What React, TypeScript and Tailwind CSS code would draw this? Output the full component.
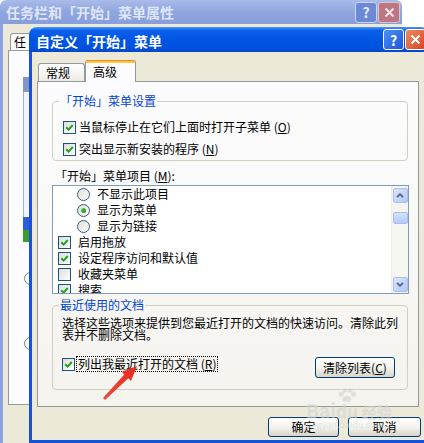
import React from 'react';

function CheckBox({ checked }: { checked: boolean }) {
  return (
    <span className="flex h-[13px] w-[13px] shrink-0 items-center justify-center border border-[#1c5180] bg-gradient-to-br from-[#dcdcd7] to-white">
      {checked && (
        <svg width="9" height="9" viewBox="0 0 9 9">
          <path d="M1.2 4.2 L3.6 6.6 L7.8 2" stroke="#21a121" strokeWidth="2" fill="none" />
        </svg>
      )}
    </span>
  );
}

function Radio({ checked }: { checked: boolean }) {
  return (
    <span className="flex h-[13px] w-[13px] shrink-0 items-center justify-center rounded-full border border-[#3b5b7a] bg-gradient-to-br from-[#dcdcd7] to-white">
      {checked && <span className="h-[5px] w-[5px] rounded-full bg-gradient-to-br from-[#55d355] to-[#1a8a1a]" />}
    </span>
  );
}

function Key({ k }: { k: string }) {
  return (
    <span>
      {' ('}
      <u>{k}</u>
      {')'}
    </span>
  );
}

function XpButton({ children, className }: { children: React.ReactNode; className: string }) {
  return (
    <div
      className={`flex items-center justify-center rounded-[3px] border border-[#003c74] bg-gradient-to-b from-white via-[#f4f3ee] to-[#d8d4c8] text-[12px] leading-none ${className}`}
    >
      {children}
    </div>
  );
}

function ScrollButton({ up }: { up: boolean }) {
  return (
    <div className="flex h-[15px] w-[15px] items-center justify-center rounded-[2px] border border-[#a9bdf0] bg-gradient-to-br from-[#dbe6fd] to-[#b4c8f6]">
      <svg width="8" height="5" viewBox="0 0 8 5">
        <path d={up ? 'M1 4.2 L4 1.2 L7 4.2' : 'M1 0.8 L4 3.8 L7 0.8'} stroke="#4d6185" strokeWidth="1.8" fill="none" />
      </svg>
    </div>
  );
}

function BackWindow() {
  return (
    <div className="absolute left-0 top-0 flex h-[443px] w-[402px] flex-col">
      {/* inactive title bar */}
      <div className="flex h-[24px] items-center rounded-t-[6px] bg-gradient-to-b from-[#a9bbea] via-[#8fa5df] to-[#889fdb] pl-[6px] pr-[2px]">
        <span className="text-[14px] font-bold leading-none text-[#dfe6f7]">任务栏和「开始」菜单属性</span>
        <div className="ml-auto flex gap-[1px]">
          <div className="flex h-[21px] w-[22px] items-center justify-center rounded-[3px] border border-[#c9d5f1] bg-[#6d89d6] text-[14px] font-bold leading-none text-[#e4eafa]">
            ?
          </div>
          <div className="flex h-[21px] w-[22px] items-center justify-center rounded-[3px] border border-[#d9c4cf] bg-[#bd7782]">
            <svg width="11" height="11" viewBox="0 0 11 11">
              <path d="M1.5 1.5 L9.5 9.5 M9.5 1.5 L1.5 9.5" stroke="#f3e6ea" strokeWidth="2" />
            </svg>
          </div>
        </div>
      </div>
      <div className="flex flex-1 flex-col border-l-[3px] border-[#8ba3e2] bg-[#ece9d8]">
        <div className="ml-[7px] mt-[9px] flex h-[17px] w-[40px] items-center rounded-t-[3px] border border-b-0 border-[#919b9c] bg-[#fcfcfe] pl-[3px]">
          任
        </div>
        <div className="ml-[5px] flex h-[355px] w-[300px] flex-col border border-[#919b9c] bg-[#fcfcfe] pl-[14px]">
          <div className="mt-[26px] h-[15px] w-[8px] bg-[#8496c8]" />
          <div className="h-[125px] w-[8px] border-l border-[#a0b0d0] bg-[#f2f5fb]" />
          <div className="h-[13px] w-[8px] bg-[#2e5fd8]" />
          <div className="h-[12px] w-[8px] bg-[#3a9d2f]" />
          <div className="ml-[1px] mt-[30px] h-[13px] w-[13px] rounded-full border border-[#6f86b6]" />
          <div className="ml-[1px] mt-[52px] h-[13px] w-[13px] rounded-full border border-[#6f86b6]" />
        </div>
      </div>
    </div>
  );
}

function Dialog() {
  return (
    <div className="absolute left-[29px] top-[27px] flex h-[416px] w-[400px] flex-col">
      {/* active title bar */}
      <div className="flex h-[25px] items-center rounded-t-[8px] bg-[linear-gradient(180deg,#4a98f7_0%,#0a5fe9_14%,#0055e5_50%,#0052df_85%,#0846c8_100%)] pl-[7px] pr-[3px]">
        <span className="pt-[3px] text-[14px] font-bold leading-none text-white">自定义「开始」菜单</span>
        <div className="ml-auto flex gap-[1px]">
          <div className="flex h-[21px] w-[21px] items-center justify-center rounded-[3px] border border-white bg-gradient-to-br from-[#4f8ff5] to-[#1d55d9] text-[14px] font-bold leading-none text-white">
            ?
          </div>
          <div className="flex h-[21px] w-[21px] items-center justify-center rounded-[3px] border border-white bg-gradient-to-br from-[#f08a5e] to-[#d7401f]">
            <svg width="11" height="11" viewBox="0 0 11 11">
              <path d="M1.5 1.5 L9.5 9.5 M9.5 1.5 L1.5 9.5" stroke="white" strokeWidth="2" />
            </svg>
          </div>
        </div>
      </div>

      <div className="flex flex-1 flex-col border-x-[3px] border-b-[3px] border-[#1652d9] bg-[#ece9d8]">
        {/* tabs */}
        <div className="ml-[6px] mt-[8px] flex h-[21px] items-end">
          <div className="flex h-[18px] w-[47px] items-center rounded-t-[3px] border border-b-0 border-[#919b9c] bg-gradient-to-b from-white to-[#ecebe6] pl-[7px]">
            常规
          </div>
          <div className="relative z-10 -mb-[1px] flex h-[22px] w-[51px] flex-col rounded-t-[3px] border-x border-[#919b9c] bg-[#fcfcfe]">
            <div className="h-[1px] rounded-t-[3px] bg-[#e68b2c]" />
            <div className="h-[2px] bg-[#ffc73c]" />
            <div className="pl-[7px] pt-[2px] leading-[14px]">高级</div>
          </div>
        </div>

        {/* tab panel */}
        <div className="ml-[5px] flex h-[326px] w-[382px] flex-col border border-[#919b9c] bg-gradient-to-b from-[#fcfcfe] to-[#f4f3ee] pl-[14px]">
          <fieldset className="mt-[12px] w-[356px] rounded-[4px] border border-[#d0d0bf] pb-[3px]">
            <legend className="ml-[6px] px-[1px] leading-[14px] text-[#0046d5]">「开始」菜单设置</legend>
            <div className="mt-[11px] flex h-[16px] items-center gap-[3px] pl-[10px]">
              <CheckBox checked />
              <span className="leading-[16px]">
                当鼠标停止在它们上面时打开子菜单<Key k="O" />
              </span>
            </div>
            <div className="mt-[6px] flex h-[16px] items-center gap-[3px] pl-[10px]">
              <CheckBox checked />
              <span className="leading-[16px]">
                突出显示新安装的程序<Key k="N" />
              </span>
            </div>
          </fieldset>

          <div className="mt-[8px] pl-[3px] leading-[14px]">
            「开始」菜单项目<Key k="M" />:
          </div>

          <div className="mt-[2px] flex h-[109px] w-[357px] border border-[#7f9db9] bg-white">
            <div className="flex flex-1 flex-col overflow-hidden">
              {[
                ['不显示此项目', false],
                ['显示为菜单', true],
                ['显示为链接', false],
              ].map(([label, on]) => (
                <div key={label as string} className="flex h-[16px] shrink-0 items-center gap-[7px] pl-[24px]">
                  <Radio checked={on as boolean} />
                  <span className="leading-[16px]">{label as string}</span>
                </div>
              ))}
              {[
                ['启用拖放', true],
                ['设定程序访问和默认值', true],
                ['收藏夹菜单', false],
                ['搜索', true],
              ].map(([label, on]) => (
                <div key={label as string} className="flex h-[16px] shrink-0 items-center gap-[7px] pl-[5px]">
                  <CheckBox checked={on as boolean} />
                  <span className="leading-[16px]">{label as string}</span>
                </div>
              ))}
            </div>
            <div className="flex w-[17px] flex-col items-center border-l border-[#eeede5] bg-[#f6f6f1]">
              <div className="mt-[2px]">
                <ScrollButton up />
              </div>
              <div className="mt-[9px] h-[12px] w-[15px] rounded-[2px] border border-[#a9bdf0] bg-gradient-to-b from-[#d6e2fd] to-[#b6caf6]" />
              <div className="flex-1" />
              <div className="mb-[1px]">
                <ScrollButton up={false} />
              </div>
            </div>
          </div>

          <fieldset className="mt-[4px] w-[356px] rounded-[4px] border border-[#d0d0bf] pb-[11px]">
            <legend className="ml-[6px] px-[1px] leading-[14px] text-[#0046d5]">最近使用的文档</legend>
            <p className="flex flex-col pl-[9px] pt-[5px] leading-[12px]">
              <span className="whitespace-nowrap">选择这些选项来提供到您最近打开的文档的快速访问。清除此列</span>
              <span className="whitespace-nowrap">表并不删除文档。</span>
            </p>
            <div className="mt-[15px] flex items-start pl-[9px] pr-[12px]">
              <div className="flex h-[16px] items-center gap-[1px]">
                <CheckBox checked />
                <span className="border border-dotted border-black px-[1px] leading-[14px]">
                  列出我最近打开的文档<Key k="R" />
                </span>
              </div>
              <XpButton className="ml-auto mt-[1px] h-[21px] w-[80px]">
                清除列表<Key k="C" />
              </XpButton>
            </div>
          </fieldset>
        </div>

        {/* bottom buttons */}
        <div className="mt-[10px] flex justify-end gap-[9px] pr-[5px]">
          <XpButton className="h-[20px] w-[71px]">确定</XpButton>
          <XpButton className="h-[20px] w-[73px]">取消</XpButton>
        </div>
      </div>
    </div>
  );
}

function Watermark() {
  return (
    <div className="pointer-events-none absolute left-[306px] top-[388px] flex flex-col items-start opacity-60">
      <div className="flex items-end">
        <span className="text-[19px] font-bold leading-none text-[#d2d2d2] [text-shadow:0_0_1px_#fff]">Bai</span>
        <div className="flex flex-col items-center">
          <svg width="20" height="14" viewBox="0 0 20 14">
            <circle cx="4" cy="6" r="2.5" fill="#d2d2d2" />
            <circle cx="8" cy="2.5" r="2.3" fill="#d2d2d2" />
            <circle cx="13" cy="2.5" r="2.3" fill="#d2d2d2" />
            <circle cx="16.5" cy="6" r="2.5" fill="#d2d2d2" />
            <ellipse cx="10" cy="11" rx="4.5" ry="3" fill="#d2d2d2" />
          </svg>
          <span className="text-[17px] font-bold leading-none text-[#d2d2d2]">du</span>
        </div>
        <span className="ml-[4px] text-[15px] font-bold leading-none text-[#d2d2d2]">经验</span>
      </div>
      <span className="mt-[1px] text-[9px] leading-none text-[#d8d8d8]">jingyan.baidu.com</span>
    </div>
  );
}

function Arrow() {
  return (
    <svg className="pointer-events-none absolute left-0 top-0" width="424" height="443" viewBox="0 0 424 443">
      <defs>
        <linearGradient id="arrowFill" x1="104" y1="399" x2="136" y2="366" gradientUnits="userSpaceOnUse">
          <stop offset="0" stopColor="#f04a3a" />
          <stop offset="1" stopColor="#e52a1e" />
        </linearGradient>
      </defs>
      <polygon
        points="137,366 131,381 128.3,378.2 105,400 103,398 124.3,374.4 121.8,371.8"
        fill="url(#arrowFill)"
      />
    </svg>
  );
}

export default function App() {
  return (
    <div className="relative h-[443px] w-[424px] overflow-hidden bg-white font-['Noto_Sans_CJK_SC','Liberation_Sans',sans-serif] text-[12px] text-black">
      <BackWindow />
      <Dialog />
      <Watermark />
      <Arrow />
    </div>
  );
}
